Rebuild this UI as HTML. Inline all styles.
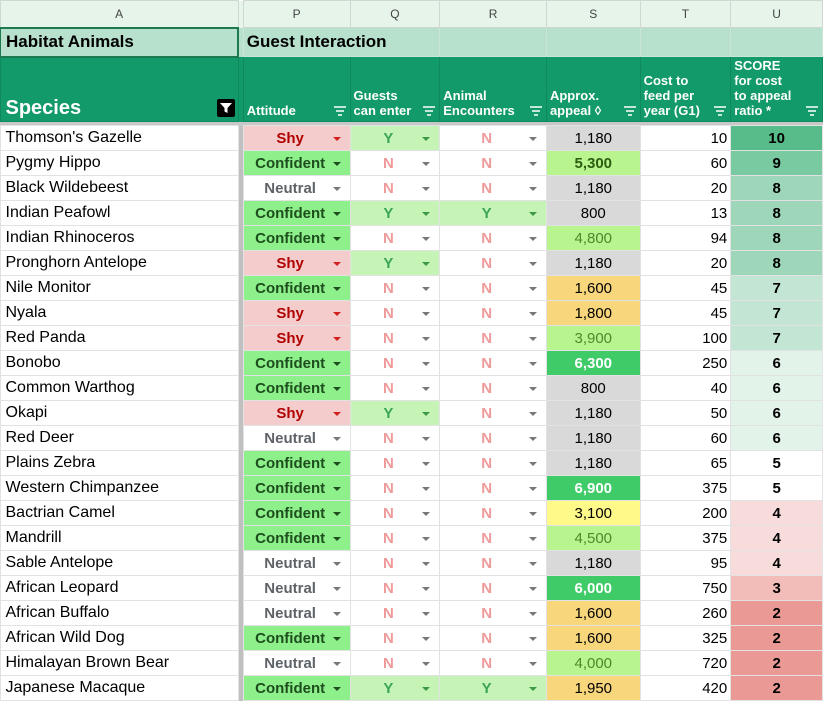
<!DOCTYPE html>
<html><head><style>
*{margin:0;padding:0;box-sizing:border-box}
body{width:824px;height:700px;overflow:hidden;background:#fff;font-family:"Liberation Sans",Arial,sans-serif;position:relative}
table{border-collapse:collapse;position:absolute;left:-1px;top:0;table-layout:fixed}
td{border:1px solid #e2e2e2;font-size:15px;white-space:nowrap;overflow:hidden;position:relative;padding:0 3px}
td.a{font-size:16px;padding-left:5px}
tr.h0 td{height:27px;background:#e6f4ea;color:#444;font-size:12px;text-align:center;border-color:#d0d7d0}
tr.h1 td{height:29px;background:#b7e1cd;font-weight:bold;font-size:17px;border-color:#c9e6d7}
tr.h2 td{height:65px;background:#129a6a;color:#fff;font-weight:bold;font-size:13px;vertical-align:bottom;padding-bottom:3px;line-height:15px;border-color:#0e8a5e}
tr.sep td{height:4px;background:#c8c8c8;border:none;padding:0}
tr.r td{height:25px}
td.g{background:#c0c0c0;border:none;padding:0}
.f{position:absolute;right:4px;bottom:5px;width:12px;height:10px}
.dd{text-align:center;font-weight:bold;padding-right:16px}
.dd::after{content:"";position:absolute;right:9px;top:11px;border-left:4px solid transparent;border-right:4px solid transparent;border-top:4px solid #777}
.shy{background:#f4cccc;color:#b10202}.shy::after{border-top-color:#d02020}
.con{background:#8df08a;color:#1e4d1e}.con::after{border-top-color:#1e4d1e}
.neu{color:#5f6368}
.y{background:#c6f3b6;color:#3aa655}.y::after{border-top-color:#3a9a45}
.n{color:#ef9a9a}
.s{text-align:center}
.gr{background:#d9d9d9}.lg{background:#b9f58f;color:#4a8a2a}.lgb{background:#b9f58f;color:#2d5d10;font-weight:bold}
.dg{background:#3ecb68;color:#fff;font-weight:bold}.or{background:#f8d67c}.ye{background:#fff98a}
.t{text-align:right}
.u{text-align:center;font-weight:bold}
</style></head><body>
<table>
<colgroup><col style="width:239px"><col style="width:5px"><col style="width:107px"><col style="width:90px"><col style="width:107px"><col style="width:94px"><col style="width:91px"><col style="width:92px"></colgroup>
<tr class="h0"><td>A</td><td class="g"></td><td>P</td><td>Q</td><td>R</td><td>S</td><td>T</td><td>U</td></tr>
<tr class="h1"><td class="a" style="border:2px solid #1e7a4e;font-size:17px">Habitat Animals</td><td class="g"></td><td colspan="2">Guest Interaction</td><td></td><td></td><td></td><td></td></tr>
<tr class="h2"><td class="a" style="font-size:20px;padding-bottom:5px">Species<svg class="f" style="width:18px;height:18px;right:3px;bottom:4px" viewBox="0 0 18 18"><rect width="18" height="18" rx="2" fill="#000"/><path d="M3 4h12l-4.5 5v5l-3-1.5V9z" fill="#fff"/></svg></td><td class="g"></td>
<td>Attitude<svg class="f" viewBox="0 0 12 10"><path d="M0 1h12M2 5h8M4 9h4" stroke="#fff" stroke-width="1.5"/></svg></td>
<td>Guests<br>can enter<svg class="f" viewBox="0 0 12 10"><path d="M0 1h12M2 5h8M4 9h4" stroke="#fff" stroke-width="1.5"/></svg></td>
<td>Animal<br>Encounters<svg class="f" viewBox="0 0 12 10"><path d="M0 1h12M2 5h8M4 9h4" stroke="#fff" stroke-width="1.5"/></svg></td>
<td>Approx.<br>appeal ◊<svg class="f" viewBox="0 0 12 10"><path d="M0 1h12M2 5h8M4 9h4" stroke="#fff" stroke-width="1.5"/></svg></td>
<td>Cost to<br>feed per<br>year (G1)<svg class="f" viewBox="0 0 12 10"><path d="M0 1h12M2 5h8M4 9h4" stroke="#fff" stroke-width="1.5"/></svg></td>
<td>SCORE<br>for cost<br>to appeal<br>ratio *<svg class="f" viewBox="0 0 12 10"><path d="M0 1h12M2 5h8M4 9h4" stroke="#fff" stroke-width="1.5"/></svg></td></tr>
<tr class="sep"><td></td><td></td><td></td><td></td><td></td><td></td><td></td><td></td></tr>
<tr class="r"><td class="a">Thomson's Gazelle</td><td class="g"></td><td class="dd shy">Shy</td><td class="dd y">Y</td><td class="dd n">N</td><td class="s gr">1,180</td><td class="t">10</td><td class="u" style="background:#57bb8a">10</td></tr>
<tr class="r"><td class="a">Pygmy Hippo</td><td class="g"></td><td class="dd con">Confident</td><td class="dd n">N</td><td class="dd n">N</td><td class="s lgb">5,300</td><td class="t">60</td><td class="u" style="background:#79c9a1">9</td></tr>
<tr class="r"><td class="a">Black Wildebeest</td><td class="g"></td><td class="dd neu">Neutral</td><td class="dd n">N</td><td class="dd n">N</td><td class="s gr">1,180</td><td class="t">20</td><td class="u" style="background:#9ed6ba">8</td></tr>
<tr class="r"><td class="a">Indian Peafowl</td><td class="g"></td><td class="dd con">Confident</td><td class="dd y">Y</td><td class="dd y">Y</td><td class="s gr">800</td><td class="t">13</td><td class="u" style="background:#9ed6ba">8</td></tr>
<tr class="r"><td class="a">Indian Rhinoceros</td><td class="g"></td><td class="dd con">Confident</td><td class="dd n">N</td><td class="dd n">N</td><td class="s lg">4,800</td><td class="t">94</td><td class="u" style="background:#9ed6ba">8</td></tr>
<tr class="r"><td class="a">Pronghorn Antelope</td><td class="g"></td><td class="dd shy">Shy</td><td class="dd y">Y</td><td class="dd n">N</td><td class="s gr">1,180</td><td class="t">20</td><td class="u" style="background:#9ed6ba">8</td></tr>
<tr class="r"><td class="a">Nile Monitor</td><td class="g"></td><td class="dd con">Confident</td><td class="dd n">N</td><td class="dd n">N</td><td class="s or">1,600</td><td class="t">45</td><td class="u" style="background:#c2e6d3">7</td></tr>
<tr class="r"><td class="a">Nyala</td><td class="g"></td><td class="dd shy">Shy</td><td class="dd n">N</td><td class="dd n">N</td><td class="s or">1,800</td><td class="t">45</td><td class="u" style="background:#c2e6d3">7</td></tr>
<tr class="r"><td class="a">Red Panda</td><td class="g"></td><td class="dd shy">Shy</td><td class="dd n">N</td><td class="dd n">N</td><td class="s lg">3,900</td><td class="t">100</td><td class="u" style="background:#c2e6d3">7</td></tr>
<tr class="r"><td class="a">Bonobo</td><td class="g"></td><td class="dd con">Confident</td><td class="dd n">N</td><td class="dd n">N</td><td class="s dg">6,300</td><td class="t">250</td><td class="u" style="background:#e2f3ea">6</td></tr>
<tr class="r"><td class="a">Common Warthog</td><td class="g"></td><td class="dd con">Confident</td><td class="dd n">N</td><td class="dd n">N</td><td class="s gr">800</td><td class="t">40</td><td class="u" style="background:#e2f3ea">6</td></tr>
<tr class="r"><td class="a">Okapi</td><td class="g"></td><td class="dd shy">Shy</td><td class="dd y">Y</td><td class="dd n">N</td><td class="s gr">1,180</td><td class="t">50</td><td class="u" style="background:#e2f3ea">6</td></tr>
<tr class="r"><td class="a">Red Deer</td><td class="g"></td><td class="dd neu">Neutral</td><td class="dd n">N</td><td class="dd n">N</td><td class="s gr">1,180</td><td class="t">60</td><td class="u" style="background:#e2f3ea">6</td></tr>
<tr class="r"><td class="a">Plains Zebra</td><td class="g"></td><td class="dd con">Confident</td><td class="dd n">N</td><td class="dd n">N</td><td class="s gr">1,180</td><td class="t">65</td><td class="u">5</td></tr>
<tr class="r"><td class="a">Western Chimpanzee</td><td class="g"></td><td class="dd con">Confident</td><td class="dd n">N</td><td class="dd n">N</td><td class="s dg">6,900</td><td class="t">375</td><td class="u">5</td></tr>
<tr class="r"><td class="a">Bactrian Camel</td><td class="g"></td><td class="dd con">Confident</td><td class="dd n">N</td><td class="dd n">N</td><td class="s ye">3,100</td><td class="t">200</td><td class="u" style="background:#f8dcdc">4</td></tr>
<tr class="r"><td class="a">Mandrill</td><td class="g"></td><td class="dd con">Confident</td><td class="dd n">N</td><td class="dd n">N</td><td class="s lg">4,500</td><td class="t">375</td><td class="u" style="background:#f8dcdc">4</td></tr>
<tr class="r"><td class="a">Sable Antelope</td><td class="g"></td><td class="dd neu">Neutral</td><td class="dd n">N</td><td class="dd n">N</td><td class="s gr">1,180</td><td class="t">95</td><td class="u" style="background:#f8dcdc">4</td></tr>
<tr class="r"><td class="a">African Leopard</td><td class="g"></td><td class="dd neu">Neutral</td><td class="dd n">N</td><td class="dd n">N</td><td class="s dg">6,000</td><td class="t">750</td><td class="u" style="background:#f2bcb8">3</td></tr>
<tr class="r"><td class="a">African Buffalo</td><td class="g"></td><td class="dd neu">Neutral</td><td class="dd n">N</td><td class="dd n">N</td><td class="s or">1,600</td><td class="t">260</td><td class="u" style="background:#ea9994">2</td></tr>
<tr class="r"><td class="a">African Wild Dog</td><td class="g"></td><td class="dd con">Confident</td><td class="dd n">N</td><td class="dd n">N</td><td class="s or">1,600</td><td class="t">325</td><td class="u" style="background:#ea9994">2</td></tr>
<tr class="r"><td class="a">Himalayan Brown Bear</td><td class="g"></td><td class="dd neu">Neutral</td><td class="dd n">N</td><td class="dd n">N</td><td class="s lg">4,000</td><td class="t">720</td><td class="u" style="background:#ea9994">2</td></tr>
<tr class="r"><td class="a">Japanese Macaque</td><td class="g"></td><td class="dd con">Confident</td><td class="dd y">Y</td><td class="dd y">Y</td><td class="s or">1,950</td><td class="t">420</td><td class="u" style="background:#ea9994">2</td></tr>
</table>
</body></html>
